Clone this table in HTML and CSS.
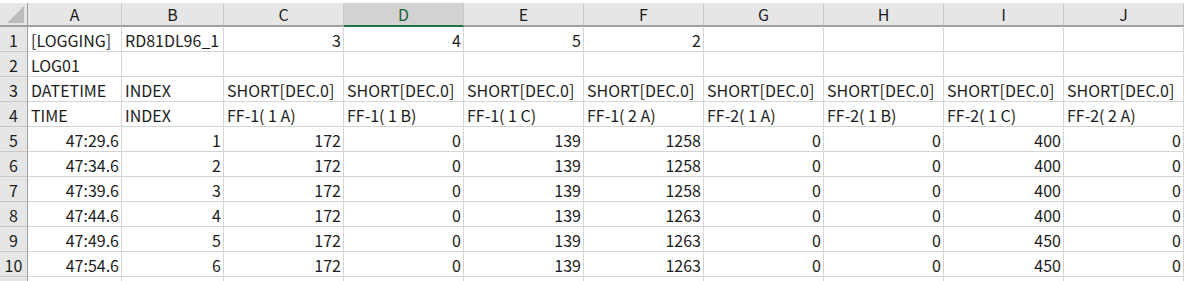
FILE: index.html
```html
<!DOCTYPE html>
<html>
<head>
<title>RD81DL96_1 LOG01</title>
<link rel="stylesheet" href="styles.css">
</head>
<body>

<table class="sheet">
  <colgroup>
    <col class="col-rowhead">
    <col class="col-a">
    <col class="col-b">
    <col class="col-std">
    <col class="col-std">
    <col class="col-std">
    <col class="col-std">
    <col class="col-std">
    <col class="col-std">
    <col class="col-std">
    <col class="col-std">
  </colgroup>
  <thead>
    <tr>
      <th class="corner">
        <svg class="corner-mark" width="17" height="17" viewBox="0 0 17 17"><polygon points="17,0 17,17 0,17" fill="#bcbcbc"/></svg>
      </th>
      <th>A</th>
      <th>B</th>
      <th>C</th>
      <th class="active">D</th>
      <th>E</th>
      <th>F</th>
      <th>G</th>
      <th>H</th>
      <th>I</th>
      <th>J</th>
    </tr>
  </thead>
  <tbody>
    <tr>
      <th>1</th>
      <td>[LOGGING]</td>
      <td>RD81DL96_1</td>
      <td class="num">3</td>
      <td class="num">4</td>
      <td class="num">5</td>
      <td class="num">2</td>
      <td></td><td></td><td></td><td></td>
    </tr>
    <tr>
      <th>2</th>
      <td>LOG01</td>
      <td></td><td></td><td></td><td></td><td></td><td></td><td></td><td></td><td></td>
    </tr>
    <tr>
      <th>3</th>
      <td>DATETIME</td>
      <td>INDEX</td>
      <td>SHORT[DEC.0]</td>
      <td>SHORT[DEC.0]</td>
      <td>SHORT[DEC.0]</td>
      <td>SHORT[DEC.0]</td>
      <td>SHORT[DEC.0]</td>
      <td>SHORT[DEC.0]</td>
      <td>SHORT[DEC.0]</td>
      <td>SHORT[DEC.0]</td>
    </tr>
    <tr>
      <th>4</th>
      <td>TIME</td>
      <td>INDEX</td>
      <td>FF-1( 1 A)</td>
      <td>FF-1( 1 B)</td>
      <td>FF-1( 1 C)</td>
      <td>FF-1( 2 A)</td>
      <td>FF-2( 1 A)</td>
      <td>FF-2( 1 B)</td>
      <td>FF-2( 1 C)</td>
      <td>FF-2( 2 A)</td>
    </tr>
    <tr>
      <th>5</th>
      <td class="num">47:29.6</td>
      <td class="num">1</td>
      <td class="num">172</td>
      <td class="num">0</td>
      <td class="num">139</td>
      <td class="num">1258</td>
      <td class="num">0</td>
      <td class="num">0</td>
      <td class="num">400</td>
      <td class="num">0</td>
    </tr>
    <tr>
      <th>6</th>
      <td class="num">47:34.6</td>
      <td class="num">2</td>
      <td class="num">172</td>
      <td class="num">0</td>
      <td class="num">139</td>
      <td class="num">1258</td>
      <td class="num">0</td>
      <td class="num">0</td>
      <td class="num">400</td>
      <td class="num">0</td>
    </tr>
    <tr>
      <th>7</th>
      <td class="num">47:39.6</td>
      <td class="num">3</td>
      <td class="num">172</td>
      <td class="num">0</td>
      <td class="num">139</td>
      <td class="num">1258</td>
      <td class="num">0</td>
      <td class="num">0</td>
      <td class="num">400</td>
      <td class="num">0</td>
    </tr>
    <tr>
      <th>8</th>
      <td class="num">47:44.6</td>
      <td class="num">4</td>
      <td class="num">172</td>
      <td class="num">0</td>
      <td class="num">139</td>
      <td class="num">1263</td>
      <td class="num">0</td>
      <td class="num">0</td>
      <td class="num">400</td>
      <td class="num">0</td>
    </tr>
    <tr>
      <th>9</th>
      <td class="num">47:49.6</td>
      <td class="num">5</td>
      <td class="num">172</td>
      <td class="num">0</td>
      <td class="num">139</td>
      <td class="num">1263</td>
      <td class="num">0</td>
      <td class="num">0</td>
      <td class="num">450</td>
      <td class="num">0</td>
    </tr>
    <tr>
      <th>10</th>
      <td class="num">47:54.6</td>
      <td class="num">6</td>
      <td class="num">172</td>
      <td class="num">0</td>
      <td class="num">139</td>
      <td class="num">1263</td>
      <td class="num">0</td>
      <td class="num">0</td>
      <td class="num">450</td>
      <td class="num">0</td>
    </tr>
    <!-- next row, only its top edge shows -->
    <tr>
      <th></th>
      <td></td><td></td><td></td><td></td><td></td><td></td><td></td><td></td><td></td><td></td>
    </tr>
  </tbody>
</table>

</body>
</html>
```

FILE: styles.css
```css
body {
  margin: 0;
  padding-top: 3px;
  background-color: white;
  font-family: "Noto Sans CJK JP", "Liberation Sans", sans-serif;
  font-size: 16px;
  color: #1c1c1c;
  overflow: hidden;
}

.sheet {
  table-layout: fixed;
  border-collapse: separate;
  border-spacing: 0;
  width: 1184px;
}

.col-rowhead { width: 28px; }
.col-a { width: 94px; }
.col-b { width: 102px; }
.col-std { width: 120px; }

/* column letters */
.sheet thead th {
  height: 22px;
  padding: 0;
  background-color: #e6e6e6;
  border-right: 1px solid #c8c8c8;
  border-bottom: 2px solid #a0a0a0;
  font-weight: normal;
  text-align: center;
  line-height: 22px;
  box-sizing: content-box;
}

.sheet thead th.active {
  background-color: #d2d2d2;
  border-bottom-color: #217346;
  color: #1e5f3b;
}

.sheet thead th.corner {
  position: relative;
  border-right: 1px solid #a0a0a0;
}

.corner-mark {
  position: absolute;
  right: 3px;
  bottom: 2px;
}

/* row numbers */
.sheet tbody th {
  height: 24px;
  padding: 0;
  background-color: #e6e6e6;
  border-right: 1px solid #a0a0a0;
  border-bottom: 1px solid #c8c8c8;
  font-weight: normal;
  text-align: center;
  vertical-align: bottom;
  line-height: 22px;
  box-sizing: content-box;
}

.sheet td {
  height: 24px;
  padding: 0 2px 0 3px;
  border-right: 1px solid #d4d4d4;
  border-bottom: 1px solid #d4d4d4;
  white-space: nowrap;
  overflow: hidden;
  vertical-align: bottom;
  line-height: 22px;
  box-sizing: content-box;
}

.sheet td.num {
  text-align: right;
}
```
